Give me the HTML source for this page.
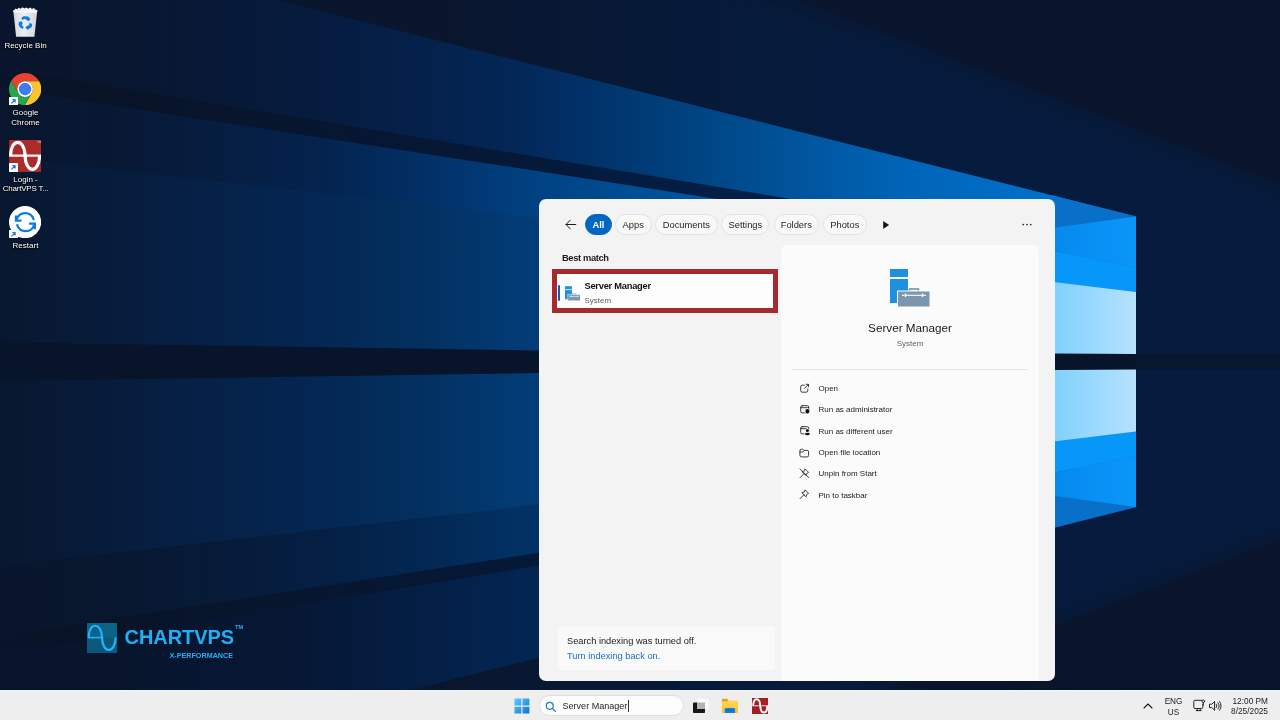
<!DOCTYPE html>
<html>
<head>
<meta charset="utf-8">
<title>Desktop</title>
<style>
html,body{margin:0;padding:0;}
body{width:1280px;height:720px;overflow:hidden;position:relative;background:#0a1730;font-family:"Liberation Sans",sans-serif;color:#1b1b1b;}
.abs{position:absolute;}
#wall{position:absolute;left:0;top:0;width:1280px;height:720px;display:block;}

/* PANEL */
#panel{will-change:transform;position:absolute;left:539px;top:199px;width:516px;height:482px;background:#f3f3f3;border-radius:7px;overflow:hidden;}
#panel .t{position:absolute;white-space:nowrap;line-height:1;}
.pill{position:absolute;top:15px;height:19px;border:1px solid #e2e2e2;border-radius:11px;background:#f8f8f8;font-size:9.33px;line-height:21px;text-align:center;color:#262626;box-sizing:content-box;overflow:hidden;}
.pill.on{background:#0067c0;border-color:#0067c0;color:#fff;font-weight:bold;}
#card{position:absolute;left:242px;top:45.5px;width:258px;height:440px;background:#fbfbfb;border-radius:6px 6px 0 0;}
#hl{position:absolute;left:13px;top:70px;width:215.5px;height:33.5px;border:5.5px solid #a52a2d;background:#fdfdfd;}
#notice{position:absolute;left:19px;top:428px;width:217px;height:43px;background:#f9f9f9;border-radius:3px;}
.act{position:absolute;left:279.5px;font-size:8px;line-height:1;color:#1b1b1b;white-space:nowrap;}
.ico{position:absolute;}

/* TASKBAR */
#tb{position:absolute;left:0;top:690px;width:1280px;height:30px;background:linear-gradient(#f4f4f4 0,#f4f4f4 1px,#eeeeee 1px,#eeeeee 100%);will-change:transform;}
#tb .t{position:absolute;white-space:nowrap;line-height:1;color:#1b1b1b;}
#sbox{position:absolute;left:538.5px;top:5px;width:145.5px;height:21px;border-radius:11px;background:#fcfcfc;border:0.7px solid #dedede;box-sizing:border-box;}
/* DESKTOP ICONS */
.dl{position:absolute;left:0;width:51px;text-align:center;color:#fff;font-size:8px;line-height:9.6px;text-shadow:0 0 1.5px #000,0.5px 0.8px 1.5px #000,0 0 2px rgba(0,0,0,.8);white-space:nowrap;}
.sc{position:absolute;width:8.7px;height:8.7px;background:#fff;border-radius:0.6px;}
.sc svg{position:absolute;left:0;top:0;display:block;}
#desk{position:absolute;left:0;top:0;width:300px;height:690px;will-change:transform;}
</style>
</head>
<body>
<!-- WALLPAPER -->
<svg id="wall" width="1280" height="720" viewBox="0 0 1280 720">
<defs>
  <linearGradient id="gBase" gradientUnits="userSpaceOnUse" x1="0" y1="0" x2="1280" y2="0">
    <stop offset="0" stop-color="#09152c"/>
    <stop offset="0.55" stop-color="#09162e"/>
    <stop offset="1" stop-color="#0a142a"/>
  </linearGradient>
  <linearGradient id="gFaint" gradientUnits="userSpaceOnUse" x1="450" y1="0" x2="900" y2="0">
    <stop offset="0" stop-color="#051c40" stop-opacity="0"/>
    <stop offset="1" stop-color="#051c40" stop-opacity="1"/>
  </linearGradient>
  <linearGradient id="gR1" gradientUnits="userSpaceOnUse" x1="0" y1="0" x2="1137" y2="0">
    <stop offset="0" stop-color="#09152c"/>
    <stop offset="0.097" stop-color="#09162f"/>
    <stop offset="0.273" stop-color="#061b3e"/>
    <stop offset="0.449" stop-color="#032656"/>
    <stop offset="0.51" stop-color="#023068"/>
    <stop offset="0.563" stop-color="#013a74"/>
    <stop offset="0.668" stop-color="#004e92"/>
    <stop offset="0.792" stop-color="#0064b6"/>
    <stop offset="1" stop-color="#0078d7"/>
  </linearGradient>
  <linearGradient id="gDB1" gradientUnits="userSpaceOnUse" x1="0" y1="0" x2="1137" y2="0">
    <stop offset="0" stop-color="#09142a"/>
    <stop offset="0.097" stop-color="#081326"/>
    <stop offset="0.273" stop-color="#071630"/>
    <stop offset="0.449" stop-color="#051836"/>
    <stop offset="0.563" stop-color="#041c42"/>
    <stop offset="1" stop-color="#04285a"/>
  </linearGradient>
  <linearGradient id="gR2" gradientUnits="userSpaceOnUse" x1="0" y1="0" x2="1137" y2="0">
    <stop offset="0" stop-color="#09162e"/>
    <stop offset="0.097" stop-color="#081834"/>
    <stop offset="0.273" stop-color="#04224c"/>
    <stop offset="0.37" stop-color="#022f65"/>
    <stop offset="0.449" stop-color="#013e7d"/>
    <stop offset="0.6" stop-color="#00549c"/>
    <stop offset="1" stop-color="#0078d7"/>
  </linearGradient>
  <linearGradient id="gR3" gradientUnits="userSpaceOnUse" x1="0" y1="0" x2="1137" y2="0">
    <stop offset="0" stop-color="#08172f"/>
    <stop offset="0.097" stop-color="#071c3c"/>
    <stop offset="0.273" stop-color="#042652"/>
    <stop offset="0.37" stop-color="#03305f"/>
    <stop offset="0.449" stop-color="#023a73"/>
    <stop offset="0.6" stop-color="#014f94"/>
    <stop offset="1" stop-color="#0078d7"/>
  </linearGradient>
  <linearGradient id="gLight" gradientUnits="userSpaceOnUse" x1="1050" y1="0" x2="1136" y2="0">
    <stop offset="0" stop-color="#7dd0fc"/>
    <stop offset="1" stop-color="#b6e2fd"/>
  </linearGradient>
  <linearGradient id="gB2" gradientUnits="userSpaceOnUse" x1="1050" y1="0" x2="1136" y2="0">
    <stop offset="0" stop-color="#0689ee"/>
    <stop offset="1" stop-color="#0a96f8"/>
  </linearGradient>
  <linearGradient id="gR2b" gradientUnits="userSpaceOnUse" x1="0" y1="0" x2="560" y2="0">
    <stop offset="0" stop-color="#09152c"/>
    <stop offset="0.196" stop-color="#08172f"/>
    <stop offset="0.554" stop-color="#051e42"/>
    <stop offset="0.75" stop-color="#032752"/>
    <stop offset="0.91" stop-color="#023062"/>
    <stop offset="1" stop-color="#02346a"/>
  </linearGradient>
  <linearGradient id="gR1b" gradientUnits="userSpaceOnUse" x1="0" y1="0" x2="560" y2="0">
    <stop offset="0" stop-color="#09152c"/>
    <stop offset="0.196" stop-color="#08152c"/>
    <stop offset="0.554" stop-color="#061836"/>
    <stop offset="0.91" stop-color="#032450"/>
    <stop offset="1" stop-color="#032756"/>
  </linearGradient>
</defs>
<rect x="0" y="0" width="1280" height="720" fill="url(#gBase)"/>
<g id="half">
  <!-- faint area right/above the window -->
  <polygon points="731,0 1280,208 1280,361.8 1136,361.8 1136,216.5 276.3,0" fill="url(#gFaint)" opacity="0.4"/>
  <polygon points="763,0 1280,196 1280,361.8 1136,361.8 1136,216.5 276.3,0" fill="url(#gFaint)" opacity="0.5"/>
  <polygon points="795,0 1280,184 1280,361.8 1136,361.8 1136,216.5 276.3,0" fill="url(#gFaint)" opacity="0.6"/>
  <!-- R3 (drawn first, each band overlaps the next by ~1px to avoid seams) -->
  <polygon points="-10,154.1 1136,285 1136,362.8 -10,362.8" fill="url(#gR3)"/>
  <!-- R2 -->
  <polygon points="-10,85.3 1136,262.5 1136,286.2 -10,155.3" fill="url(#gR2)"/>
  <!-- dark band 1 -->
  <polygon points="-10,65.1 1136,254.9 1136,263.7 -10,86.5" fill="url(#gDB1)"/>
  <!-- R1 upper beam -->
  <polygon points="-10,-72.1 1136,216.5 1136,256.1 -10,66.3" fill="url(#gR1)"/>
  <!-- window pane -->
  <polygon points="1050,194.8 1136,216.5 1050,228.2" fill="#0870c9"/>
  <polygon points="1050,228.2 1136,216.5 1136,267.5 1050,250" fill="url(#gB2)"/>
  <polygon points="1050,250 1136,267.5 1136,292 1050,281.4" fill="#0697f9"/>
  <polygon points="1050,281.4 1136,292 1136,361.8 1050,361.8" fill="url(#gLight)"/>
</g>
<use href="#half" transform="matrix(1 0 0 -1 0 723.5)"/>
<!-- lower half is dimmer: overrides -->
<polygon points="-10,637.6 560,549.5 560,502.1 -10,567.2" fill="url(#gR2b)"/>
<polygon points="-10,795.6 560,652.1 560,562.1 -10,656.6" fill="url(#gR1b)"/>
<!-- horizontal dark band -->
<polygon points="0,342.5 537,350.5 1136,354 1136,369.5 537,373 0,381" fill="#07142a"/>
<polygon points="1136,354 1280,354 1280,369.5 1136,369.5" fill="#081730"/>
</svg>

<!-- DESKTOP ICONS -->
<div id="desk">
  <!-- recycle bin -->
  <svg class="ico" style="left:12px;top:6px" width="27" height="32" viewBox="0 0 27 32">
    <defs><linearGradient id="rbG" x1="0" y1="0" x2="1" y2="0"><stop offset="0" stop-color="#dfe2e6"/><stop offset="0.45" stop-color="#f7f8f9"/><stop offset="1" stop-color="#d9dde2"/></linearGradient></defs>
    <path d="M2.2 4.6L3.4 2.6L5.2 3.2L6.6 1.7L8.6 2.8L10.4 1.3L12.4 2.6L14.4 1.4L16.2 2.7L18.2 1.5L20 2.9L21.8 1.9L23.2 3.3L24.4 4.6Z" fill="#f4f5f7"/>
    <path d="M1.3 4.3L25.3 4.3L22.4 30.7L4.1 30.7Z" fill="url(#rbG)" opacity="0.96"/>
    <path d="M1.3 4.3L25.3 4.3L25 6.4L1.6 6.4Z" fill="#fafbfc"/>
    <g fill="#127adf"><polygon points="9.2,12.1 11.6,10.2 16.1,10.6 18.4,12.9 16.8,15.3 14.4,13.7 12.4,12.7 10.7,13.9"/><polygon points="6.9,16.0 9.9,15.2 10.7,17.7 9.7,19.3 11.6,20.7 11.1,22.8 8.6,22.1 6.6,19.3"/><polygon points="17.7,16.8 20.2,18.2 19.7,21.0 15.8,23.8 13.3,21.7 14.9,19.9 16.9,19.3"/></g>
  </svg>
  <div class="dl" style="top:40.5px;">Recycle Bin</div>
  <!-- chrome -->
  <svg class="ico" style="left:9.2px;top:73.2px" width="32.2" height="32.2" viewBox="0 0 32 32">
    <path d="M16 8.2L29.97 8.2A16 16 0 0 0 2.27 7.8L9.25 19.9A7.8 7.8 0 0 1 16 8.2Z" fill="#e8412f"/>
    <path d="M22.75 19.9L15.77 32A16 16 0 0 0 29.97 8.2L16 8.2A7.8 7.8 0 0 1 22.75 19.9Z" fill="#fcc62b"/>
    <path d="M9.25 19.9L2.27 7.8A16 16 0 0 0 15.77 32L22.75 19.9A7.8 7.8 0 0 1 9.25 19.9Z" fill="#2aa54c"/>
    <circle cx="16" cy="16" r="7.8" fill="#fff"/>
    <circle cx="16" cy="16" r="6.2" fill="#3a7ceb"/>
  </svg>
  <div class="sc" style="left:9.2px;top:96.6px;"><svg width="9" height="9" viewBox="0 0 9 9"><path d="M2.4 6.4L5.8 3M3.4 2.7H6.1V5.4" fill="none" stroke="#1a7bdc" stroke-width="1.2"/></svg></div>
  <div class="dl" style="top:108px;">Google<br>Chrome</div>
  <!-- chartvps -->
  <svg class="ico" style="left:9.2px;top:139.8px" width="32.2" height="32" viewBox="0 0 32 32">
    <rect x="0" y="0" width="32" height="32" fill="#a92b2b"/>
    <path d="M0 15.7H32" stroke="#fdf4f4" stroke-width="2.3"/>
    <path d="M1.5 15.6C1.5 -2 15.6 -2 16 15.6C16.4 33.9 30.2 33.9 30.5 15.6" fill="none" stroke="#fff" stroke-width="3.1"/>
    <path d="M28.3 1.2h1.6M29.1 1.2v1.6M30.4 2.8V1.2l.6 1 .6-1v1.6" fill="none" stroke="#f3d6d6" stroke-width="0.45"/>
  </svg>
  <div class="sc" style="left:9.2px;top:162.9px;"><svg width="9" height="9" viewBox="0 0 9 9"><path d="M2.4 6.4L5.8 3M3.4 2.7H6.1V5.4" fill="none" stroke="#1a7bdc" stroke-width="1.2"/></svg></div>
  <div class="dl" style="top:174.5px;">Login -<br><span style="letter-spacing:-0.2px">ChartVPS T...</span></div>
  <!-- restart -->
  <svg class="ico" style="left:9.3px;top:206.3px" width="32.2" height="32.2" viewBox="0 0 32 32">
    <circle cx="16" cy="16" r="16" fill="#fefefe"/>
    <g fill="none" stroke="#0d7de1" stroke-width="2.25" stroke-linecap="round" stroke-linejoin="miter">
      <path d="M24.4 13A8.8 8.8 0 0 0 7.6 13.4"/>
      <path d="M8.2 19A8.8 8.8 0 0 0 25 18.6"/>
      <path d="M6.9 9.4V14.5H12.4" stroke-linecap="butt"/>
      <path d="M19.8 17.6H25.7V23" stroke-linecap="butt"/>
    </g>
  </svg>
  <div class="sc" style="left:9.2px;top:229.8px;"><svg width="9" height="9" viewBox="0 0 9 9"><path d="M2.4 6.4L5.8 3M3.4 2.7H6.1V5.4" fill="none" stroke="#1a7bdc" stroke-width="1.2"/></svg></div>
  <div class="dl" style="top:240.5px;">Restart</div>
</div>

<!-- CHARTVPS LOGO -->
<div id="logo" style="position:absolute;left:0;top:600px;width:300px;height:80px;will-change:transform;">
  <svg class="ico" style="left:87px;top:22.8px" width="30" height="30" viewBox="0 0 30 30">
    <rect x="0" y="0" width="30" height="30" fill="#0d587a"/>
    <rect x="0" y="0" width="30" height="14.6" fill="#0c6288"/>
    <path d="M1.6 14.6C1.6 -1.2 14.6 -1.2 15 14.6C15.4 31 28.4 31 28.6 14.6" fill="none" stroke="#21b4fb" stroke-width="2.2"/>
    <path d="M1 14.6H15" stroke="#21b4fb" stroke-width="1.6"/>
  </svg>
  <div class="abs" style="left:124.5px;top:28.2px;font-size:19.95px;font-weight:bold;line-height:1;color:#1fb1f6;white-space:nowrap;">CHARTVPS</div>
  <div class="abs" style="left:235px;top:25.2px;font-size:5.6px;font-weight:bold;line-height:1;color:#1fb1f6;">TM</div>
  <div class="abs" style="left:169.5px;top:51.6px;font-size:7.2px;font-weight:bold;line-height:1;color:#1fb1f6;white-space:nowrap;">X-PERFORMANCE</div>
</div>

<!-- TASKBAR -->
<div id="tb">
  <!-- start -->
  <svg class="ico" style="left:514px;top:8.4px" width="16" height="16" viewBox="0 0 16 16">
    <defs><linearGradient id="wG" x1="0" y1="0" x2="1" y2="1"><stop offset="0" stop-color="#5ecbf9"/><stop offset="1" stop-color="#0a74d4"/></linearGradient></defs>
    <path d="M0.4 0.6H7.3V7.5H0.4ZM8.5 0.6H15.4V7.5H8.5ZM0.4 8.7H7.3V15.6H0.4ZM8.5 8.7H15.4V15.6H8.5Z" fill="url(#wG)"/>
  </svg>
  <div id="sbox"></div>
  <svg class="ico" style="left:545px;top:10.5px" width="12" height="12" viewBox="0 0 12 12" fill="none" stroke-linecap="round">
    <circle cx="4.8" cy="4.8" r="3.5" stroke="#1672d6" stroke-width="1.15"/>
    <path d="M4.8 1.3A3.5 3.5 0 0 1 8.3 4.8" stroke="#3bb273" stroke-width="1.15"/>
    <path d="M7.4 7.4L10.4 10.4" stroke="#1672d6" stroke-width="1.3"/>
  </svg>
  <div class="t" style="left:562.5px;top:12.3px;font-size:9.05px;color:#262626;">Server Manager</div>
  <div class="abs" style="left:628px;top:9.5px;width:1px;height:12.3px;background:#333;"></div>
  <!-- task view -->
  <svg class="ico" style="left:692px;top:7px" width="18" height="18" viewBox="0 0 18 18">
    <rect x="1" y="5.5" width="12" height="10.5" rx="0.8" fill="#161616"/>
    <rect x="5.3" y="1.7" width="11.3" height="10.3" rx="0.8" fill="#fbfbfb"/>
    <rect x="5.3" y="5.5" width="7.7" height="6.5" fill="#b4b4b4"/>
  </svg>
  <!-- folder -->
  <svg class="ico" style="left:721px;top:8px" width="18" height="16" viewBox="0 0 18 16">
    <defs><linearGradient id="foG" x1="0" y1="0" x2="0" y2="1"><stop offset="0" stop-color="#ffd65c"/><stop offset="1" stop-color="#fbbf2a"/></linearGradient></defs>
    <path d="M0.8 2A1.2 1.2 0 0 1 2 0.8H6L7.6 2.4V4.5H0.8Z" fill="#e6a30a"/>
    <path d="M0.8 3.6H6.2L7.6 2.4H16A1 1 0 0 1 17 3.4V14A1 1 0 0 1 16 15H1.8A1 1 0 0 1 0.8 14Z" fill="url(#foG)"/>
    <path d="M3.7 11.3A1.2 1.2 0 0 1 4.9 10.1H12.9A1.2 1.2 0 0 1 14.1 11.3V15H3.7Z" fill="#0f7fe0"/>
    <path d="M5 12.3H12.8" stroke="#0a62b8" stroke-width="0.8"/>
  </svg>
  <!-- chartvps -->
  <svg class="ico" style="left:751.7px;top:8px" width="16.5" height="16" viewBox="0 0 33 32">
    <rect x="0" y="0" width="33" height="32" fill="#a32022"/>
    <path d="M0 15.6H33" stroke="#f0d4d4" stroke-width="2"/>
    <path d="M2.4 15.6C2.4 -2 16 -2 16.5 15.6C17 33.6 30.4 33.6 30.8 15.6" fill="none" stroke="#fff" stroke-width="3.8"/>
  </svg>
  <!-- tray -->
  <svg class="ico" style="left:1143px;top:13px" width="10" height="6" viewBox="0 0 10 6"><path d="M1 5L5 1L9 5" fill="none" stroke="#1b1b1b" stroke-width="1.1" stroke-linecap="round" stroke-linejoin="round"/></svg>
  <div class="t" style="left:1158px;width:31px;text-align:center;top:7.6px;font-size:8.2px;">ENG</div>
  <div class="t" style="left:1158px;width:31px;text-align:center;top:19px;font-size:8.2px;">US</div>
  <svg class="ico" style="left:1192.5px;top:9px" width="13" height="13" viewBox="0 0 13 13" fill="none" stroke="#1b1b1b" stroke-width="0.95" stroke-linecap="round" stroke-linejoin="round">
    <path d="M8.6 1.3H2A1.2 1.2 0 0 0 .8 2.5V8.3A1.2 1.2 0 0 0 2 9.5H8.6A1.2 1.2 0 0 0 9.8 8.3V5.2"/>
    <path d="M3.2 11.6H8.2M4.2 9.5V11.6M7.2 9.5V11.6"/>
    <circle cx="10.3" cy="2.3" r="1.3"/>
    <path d="M10.3 3.6V6"/>
  </svg>
  <svg class="ico" style="left:1208.5px;top:10.4px" width="13" height="12" viewBox="0 0 13 12" fill="none" stroke="#1b1b1b" stroke-width="0.95" stroke-linecap="round" stroke-linejoin="round">
    <path d="M.9 4.2H2.8L5.6 1.5V10.3L2.8 7.6H.9Z"/>
    <path d="M7.3 4.2A2.6 2.6 0 0 1 7.3 7.6"/>
    <path d="M8.9 2.8A4.6 4.6 0 0 1 8.9 9"/>
    <path d="M10.5 1.5A6.6 6.6 0 0 1 10.5 10.3"/>
  </svg>
  <div class="t" style="left:1200px;width:68px;text-align:right;top:6.9px;font-size:8.3px;">12:00 PM</div>
  <div class="t" style="left:1200px;width:68px;text-align:right;top:17px;font-size:8.3px;">8/25/2025</div>
</div>

<!-- SEARCH PANEL -->
<div id="panel">
  <svg class="ico" style="left:26px;top:20px" width="12" height="11" viewBox="0 0 12 11"><path d="M10.8 5.5H1.2M5.2 1.2L1 5.5l4.2 4.3" fill="none" stroke="#1b1b1b" stroke-width="1" stroke-linecap="round" stroke-linejoin="round"/></svg>
  <div class="pill on" style="left:46px;width:25px;">All</div>
  <div class="pill" style="left:76px;width:34.5px;">Apps</div>
  <div class="pill" style="left:115.8px;width:61px;">Documents</div>
  <div class="pill" style="left:182.2px;width:46.3px;">Settings</div>
  <div class="pill" style="left:234.5px;width:43.5px;">Folders</div>
  <div class="pill" style="left:283.8px;width:42px;">Photos</div>
  <svg class="ico" style="left:343.6px;top:21.9px" width="6.2" height="8" viewBox="0 0 7 9"><path d="M0.5 0.6L6.4 4.5L0.5 8.4Z" fill="#111" stroke="#111" stroke-width="0.6" stroke-linejoin="round"/></svg>
  <svg class="ico" style="left:483px;top:24px" width="10" height="3" viewBox="0 0 10 3"><circle cx="1.3" cy="1.5" r="0.85" fill="#1b1b1b"/><circle cx="5" cy="1.5" r="0.85" fill="#1b1b1b"/><circle cx="8.7" cy="1.5" r="0.85" fill="#1b1b1b"/></svg>
  <div class="t" style="left:23px;top:55px;font-size:9.3px;font-weight:bold;letter-spacing:-0.35px;">Best match</div>
  <div id="card"></div>
  <div id="hl">
    <div class="abs" style="left:0.5px;top:10.5px;width:2px;height:16px;background:#0a5bc9;border-radius:1px;"></div>
    <svg class="ico" style="left:7.7px;top:11.6px" width="15.4" height="15" viewBox="0 0 40 38"><rect x="0" y="0" width="18" height="8" fill="#1f8fe0"/><rect x="0" y="10" width="18" height="24" fill="#1f8fe0"/><rect x="19.5" y="20" width="9" height="3" fill="none" stroke="#7a97ad" stroke-width="1.6"/><rect x="7.5" y="22" width="32.5" height="16" fill="#7a97ad" stroke="#fdfdfd" stroke-width="1.2"/><path d="M12 26.5h24" stroke="#fff" stroke-width="1.6"/><path d="M16 24.5v4M32 24.5v4" stroke="#fff" stroke-width="1.6"/></svg>
    <div class="t" style="left:27.5px;top:8px;font-size:9.3px;font-weight:bold;letter-spacing:-0.25px;color:#111;">Server Manager</div>
    <div class="t" style="left:27.5px;top:23px;font-size:8px;color:#616161;">System</div>
  </div>
  <!-- detail -->
  <svg class="ico" style="left:351px;top:70px" width="40" height="38" viewBox="0 0 40 38"><rect x="0" y="0" width="18" height="8" fill="#1f8fe0"/><rect x="0" y="10" width="18" height="24" fill="#1f8fe0"/><rect x="19.6" y="20" width="8.8" height="3" fill="none" stroke="#7a97ad" stroke-width="1.7"/><rect x="7.5" y="22" width="32.5" height="16" fill="#7a97ad" stroke="#fbfbfb" stroke-width="1"/><path d="M12 26.3h24" stroke="#fff" stroke-width="1.1"/><path d="M15.5 24.6v3.4M32.5 24.6v3.4" stroke="#fff" stroke-width="1.3"/></svg>
  <div class="t" style="left:242px;width:258px;text-align:center;top:122.5px;font-size:11.7px;color:#1b1b1b;">Server Manager</div>
  <div class="t" style="left:242px;width:258px;text-align:center;top:141px;font-size:8px;color:#616161;">System</div>
  <div class="abs" style="left:253px;top:169.5px;width:236px;height:1px;background:#e6e6e6;"></div>
  <div class="act" style="top:186.1px;">Open</div>
  <div class="act" style="top:207.4px;">Run as administrator</div>
  <div class="act" style="top:228.7px;">Run as different user</div>
  <div class="act" style="top:250px;">Open file location</div>
  <div class="act" style="top:271.3px;">Unpin from Start</div>
  <div class="act" style="top:292.6px;">Pin to taskbar</div>

  <!-- action icons -->
  <svg class="ico" style="left:260.5px;top:184.3px" width="10" height="10" viewBox="0 0 10 10" fill="none" stroke="#1b1b1b" stroke-width="0.85" stroke-linecap="round" stroke-linejoin="round"><path d="M4.2 2.2H2.3A1.6 1.6 0 0 0 .7 3.8V7.6A1.6 1.6 0 0 0 2.3 9.2H6.2A1.6 1.6 0 0 0 7.8 7.6V5.8"/><path d="M4.6 5.2L8.5 1.3M6.1 1.3H8.5V3.7"/></svg>
  <svg class="ico" style="left:260.5px;top:206px" width="11" height="10" viewBox="0 0 11 10" fill="none" stroke="#1b1b1b" stroke-width="0.85" stroke-linecap="round" stroke-linejoin="round"><rect x=".7" y=".7" width="8" height="7.1" rx="1.5"/><path d="M.7 2.7H8.7"/><path d="M7.4 3.5C6.6 4.1 5.8 4.3 5 4.3V6.3C5 7.7 6.2 8.6 7.4 9C8.6 8.6 9.8 7.7 9.8 6.3V4.3C9 4.3 8.2 4.1 7.4 3.5Z" fill="#111" stroke="#fbfbfb" stroke-width="0.9"/></svg>
  <svg class="ico" style="left:260.5px;top:227.3px" width="11" height="11" viewBox="0 0 11 11" fill="none" stroke="#1b1b1b" stroke-width="0.85" stroke-linecap="round" stroke-linejoin="round"><rect x=".7" y=".7" width="8" height="7.1" rx="1.5"/><path d="M.7 2.7H6"/><circle cx="7.4" cy="4.6" r="1.9" fill="#fbfbfb" stroke="none"/><ellipse cx="7.4" cy="8" rx="3" ry="2" fill="#fbfbfb" stroke="none"/><circle cx="7.4" cy="4.6" r="1.5" fill="#111" stroke="none"/><ellipse cx="7.4" cy="8" rx="2.4" ry="1.35" fill="#111" stroke="none"/></svg>
  <svg class="ico" style="left:260px;top:248.5px" width="11" height="10" viewBox="0 0 11 10" fill="none" stroke="#1b1b1b" stroke-width="0.85" stroke-linecap="round" stroke-linejoin="round"><path d="M.9 2.6A1.4 1.4 0 0 1 2.3 1.2H3.7L4.9 2.4H8.2A1.4 1.4 0 0 1 9.6 3.8V7.5A1.4 1.4 0 0 1 8.2 8.9H2.3A1.4 1.4 0 0 1 .9 7.5Z"/><path d="M.9 4H3.8L4.9 2.9"/></svg>
  <svg class="ico" style="left:260px;top:269.3px" width="11" height="11" viewBox="0 0 11 11" fill="none" stroke="#1b1b1b" stroke-width="0.8" stroke-linecap="round" stroke-linejoin="round"><path d="M6.3 1.1L9.6 4.4L7.7 5.5L6.9 7.6L3.1 3.8L5.2 3Z"/><path d="M4.9 5.8L1 9.7"/><path d="M1 .9L9.8 9.7"/></svg>
  <svg class="ico" style="left:260px;top:290.3px" width="11" height="11" viewBox="0 0 11 11" fill="none" stroke="#1b1b1b" stroke-width="0.85" stroke-linecap="round" stroke-linejoin="round"><path d="M6.3 1.1L9.6 4.4L7.7 5.5L6.9 7.8L2.9 3.8L5.2 3Z"/><path d="M4.9 5.8L1 9.7"/></svg>
  <div id="notice">
    <div class="t" style="left:9px;top:9.5px;font-size:9.25px;color:#1b1b1b;">Search indexing was turned off.</div>
    <div class="t" style="left:9px;top:24.6px;font-size:9.25px;color:#1a6fc9;">Turn indexing back on.</div>
  </div>
</div>

</body>
</html>
